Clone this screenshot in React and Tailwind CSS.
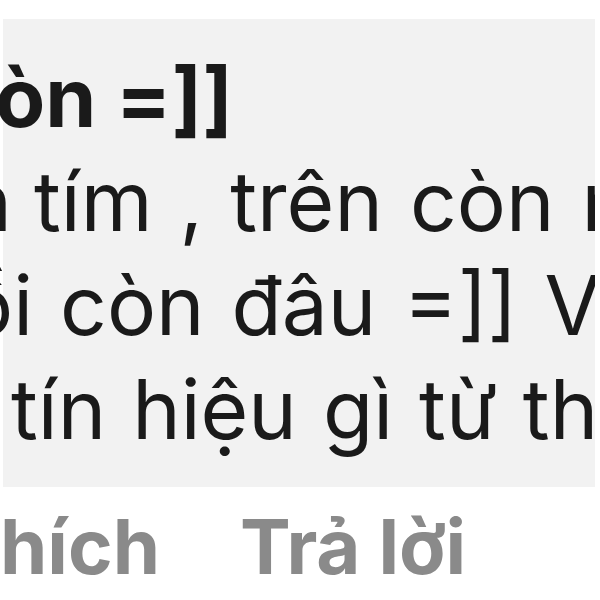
export default function App() {
  const font = { fontFamily: "Inter, 'Noto Sans', sans-serif" };
  return (
    <div className="w-[600px] h-[600px] bg-white overflow-hidden" style={font}>
      <div className="pt-[19px] pl-[3px] pr-[5px]">
        <div className="bg-[#f2f2f2] h-[468px] pt-[27px] text-[82px] leading-[104px] text-[#1a1a1a] [word-spacing:4px] [clip-path:inset(0_0_0_-20px)]">
          <div className="flex whitespace-nowrap font-bold [word-spacing:0px]">
            <span className="w-[0px] shrink-0 flex justify-end">Hết c</span>
            <span className="-ml-[8px]">òn =]]</span>
          </div>
          <div className="flex whitespace-nowrap">
            <span className="w-[9px] shrink-0 flex justify-end">nhắn</span>
            <span className="ml-[22px]">tím , trên còn nhiều</span>
          </div>
          <div className="flex whitespace-nowrap">
            <span className="w-[30px] shrink-0 flex justify-end">rồi</span>
            <span>&nbsp;còn đâu =]] Vả lại</span>
          </div>
          <div className="flex whitespace-nowrap [word-spacing:3px]">
            <span className="w-[8px] shrink-0 flex justify-end">có&nbsp;</span>
            <span>tín hiệu gì từ thằng</span>
          </div>
        </div>
      </div>
      <div className="flex whitespace-nowrap mt-[21px] text-[76px] leading-none font-bold text-[#8a8a8a]">
        <span className="w-[0px] shrink-0 flex justify-end">T</span>
        <span>hích</span>
        <span className="ml-[80px]">Trả lời</span>
      </div>
    </div>
  );
}
